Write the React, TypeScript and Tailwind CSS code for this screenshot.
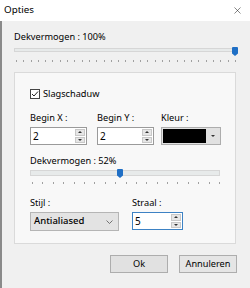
import { X } from "lucide-react";

type SliderProps = {
  width: number;
  trackH: number;
  thumbLeft: number;
  ticks: number;
  tickGap: number;
};

function Slider({ width, trackH, thumbLeft, ticks, tickGap }: SliderProps) {
  return (
    <div className="flex flex-col" style={{ width }}>
      <div className="relative h-[10px]">
        <div
          className="absolute left-0 right-0 top-[1px] bg-[#e7eaea] border border-[#d6d6d6]"
          style={{ height: trackH }}
        />
        <svg
          className="absolute top-0"
          style={{ left: thumbLeft }}
          width="6"
          height="9"
          viewBox="0 0 6 9"
        >
          <path d="M1 0 H5 Q6 0 6 1 V6.5 L3 9 L0 6.5 V1 Q0 0 1 0 Z" fill="#1f6fc5" />
        </svg>
      </div>
      <div className="flex mt-[3px] pl-[2px]" style={{ gap: tickGap - 1 }}>
        {Array.from({ length: ticks }).map((_, i) => (
          <div key={i} className="w-px h-[2px] bg-[#a0a0a0]" />
        ))}
      </div>
    </div>
  );
}

function SpinInput({ value, width, focus }: { value: string; width: number; focus?: boolean }) {
  return (
    <div
      className={
        "flex h-[18px] bg-white border " +
        (focus ? "border-[#3d82c4]" : "border-[#9a9a9a]")
      }
      style={{ width }}
    >
      <div className="flex-1 pl-[2px] leading-[16px] text-[10px] text-black">{value}</div>
      <div className="flex flex-col w-[10px] my-[1px] mr-[1px] gap-px">
        <div className="flex-1 flex items-center justify-center bg-[#e6e6e6] border border-[#c8c8c8]">
          <div className="w-0 h-0 border-l-[2px] border-r-[2px] border-b-[2px] border-l-transparent border-r-transparent border-b-[#333]" />
        </div>
        <div className="flex-1 flex items-center justify-center bg-[#e6e6e6] border border-[#c8c8c8]">
          <div className="w-0 h-0 border-l-[2px] border-r-[2px] border-t-[2px] border-l-transparent border-r-transparent border-t-[#333]" />
        </div>
      </div>
    </div>
  );
}

export default function App() {
  return (
    <div className="w-[250px] h-[288px] flex flex-col bg-[#f0f0f0] text-black text-[9.2px] font-['Noto_Sans','DejaVu_Sans',sans-serif] overflow-hidden">
      <div className="h-[21px] shrink-0 flex items-center justify-between bg-white pl-[4px] pr-[7px]">
        <span className="text-[9.8px]">Opties</span>
        <X size={11} strokeWidth={1.2} className="text-[#222]" />
      </div>

      <div className="flex-1 flex flex-col border-l-2 border-[#8a8a8a] pl-[12px]">
        <div className="mt-[9px] leading-[14px]">Dekvermogen : 100%</div>
        <div className="mt-[3px]">
          <Slider width={223} trackH={4} thumbLeft={218} ticks={31} tickGap={7.3} />
        </div>

        <div className="mt-[10px] w-[222px] h-[172px] bg-[#f8f8f8] border border-[#dadada] pl-[15px] flex flex-col">
          <div className="mt-[14px] flex items-center gap-[3px]">
            <div className="w-[10px] h-[10px] border border-[#444] bg-white flex items-center justify-center">
              <svg width="8" height="8" viewBox="0 0 8 8">
                <path d="M1 4 L3 6 L7 1.5" fill="none" stroke="#222" strokeWidth="1" />
              </svg>
            </div>
            <span className="leading-[14px]">Slagschaduw</span>
          </div>

          <div className="mt-[10px] flex">
            <div className="flex flex-col w-[57px]">
              <span className="leading-[14px]">Begin X :</span>
              <div className="mt-[2px]">
                <SpinInput value="2" width={57} />
              </div>
            </div>
            <div className="flex flex-col w-[57px] ml-[10px]">
              <span className="leading-[14px]">Begin Y :</span>
              <div className="mt-[2px]">
                <SpinInput value="2" width={57} />
              </div>
            </div>
            <div className="flex flex-col w-[60px] ml-[7px]">
              <span className="leading-[14px]">Kleur :</span>
              <div className="mt-[2px] h-[18px] flex bg-[#e1e1e1] border border-[#adadad] p-[1px]">
                <div className="flex-1 bg-black" />
                <div className="w-[13px] flex items-center justify-center">
                  <div className="w-0 h-0 border-l-[2px] border-r-[2px] border-t-[2px] border-l-transparent border-r-transparent border-t-[#333]" />
                </div>
              </div>
            </div>
          </div>

          <div className="mt-[9px] leading-[14px]">Dekvermogen : 52%</div>
          <div className="mt-[1px]">
            <Slider width={190} trackH={6} thumbLeft={87} ticks={19} tickGap={10.4} />
          </div>

          <div className="mt-[12px] flex">
            <div className="flex flex-col w-[89px]">
              <span className="leading-[14px]">Stijl :</span>
              <div className="mt-[2px] h-[19px] flex items-center justify-between bg-[#e3e3e3] border border-[#b5b5b5] pl-[3px] pr-[5px]">
                <span className="font-medium text-[9.5px]">Antialiased</span>
                <svg width="7" height="4" viewBox="0 0 7 4">
                  <path d="M0.5 0.5 L3.5 3.5 L6.5 0.5" fill="none" stroke="#555" strokeWidth="0.8" />
                </svg>
              </div>
            </div>
            <div className="flex flex-col w-[51px] ml-[13px]">
              <span className="leading-[14px]">Straal :</span>
              <div className="mt-[2px]">
                <SpinInput value="5" width={51} focus />
              </div>
            </div>
          </div>
        </div>

        <div className="mt-[11px] flex gap-[11px] pl-[96px]">
          <button className="w-[58px] h-[18px] bg-[#e1e1e1] border border-[#adadad] leading-[16px]">Ok</button>
          <button className="w-[58px] h-[18px] bg-[#e5e5e5] border border-[#adadad] leading-[16px]">Annuleren</button>
        </div>
      </div>
    </div>
  );
}
